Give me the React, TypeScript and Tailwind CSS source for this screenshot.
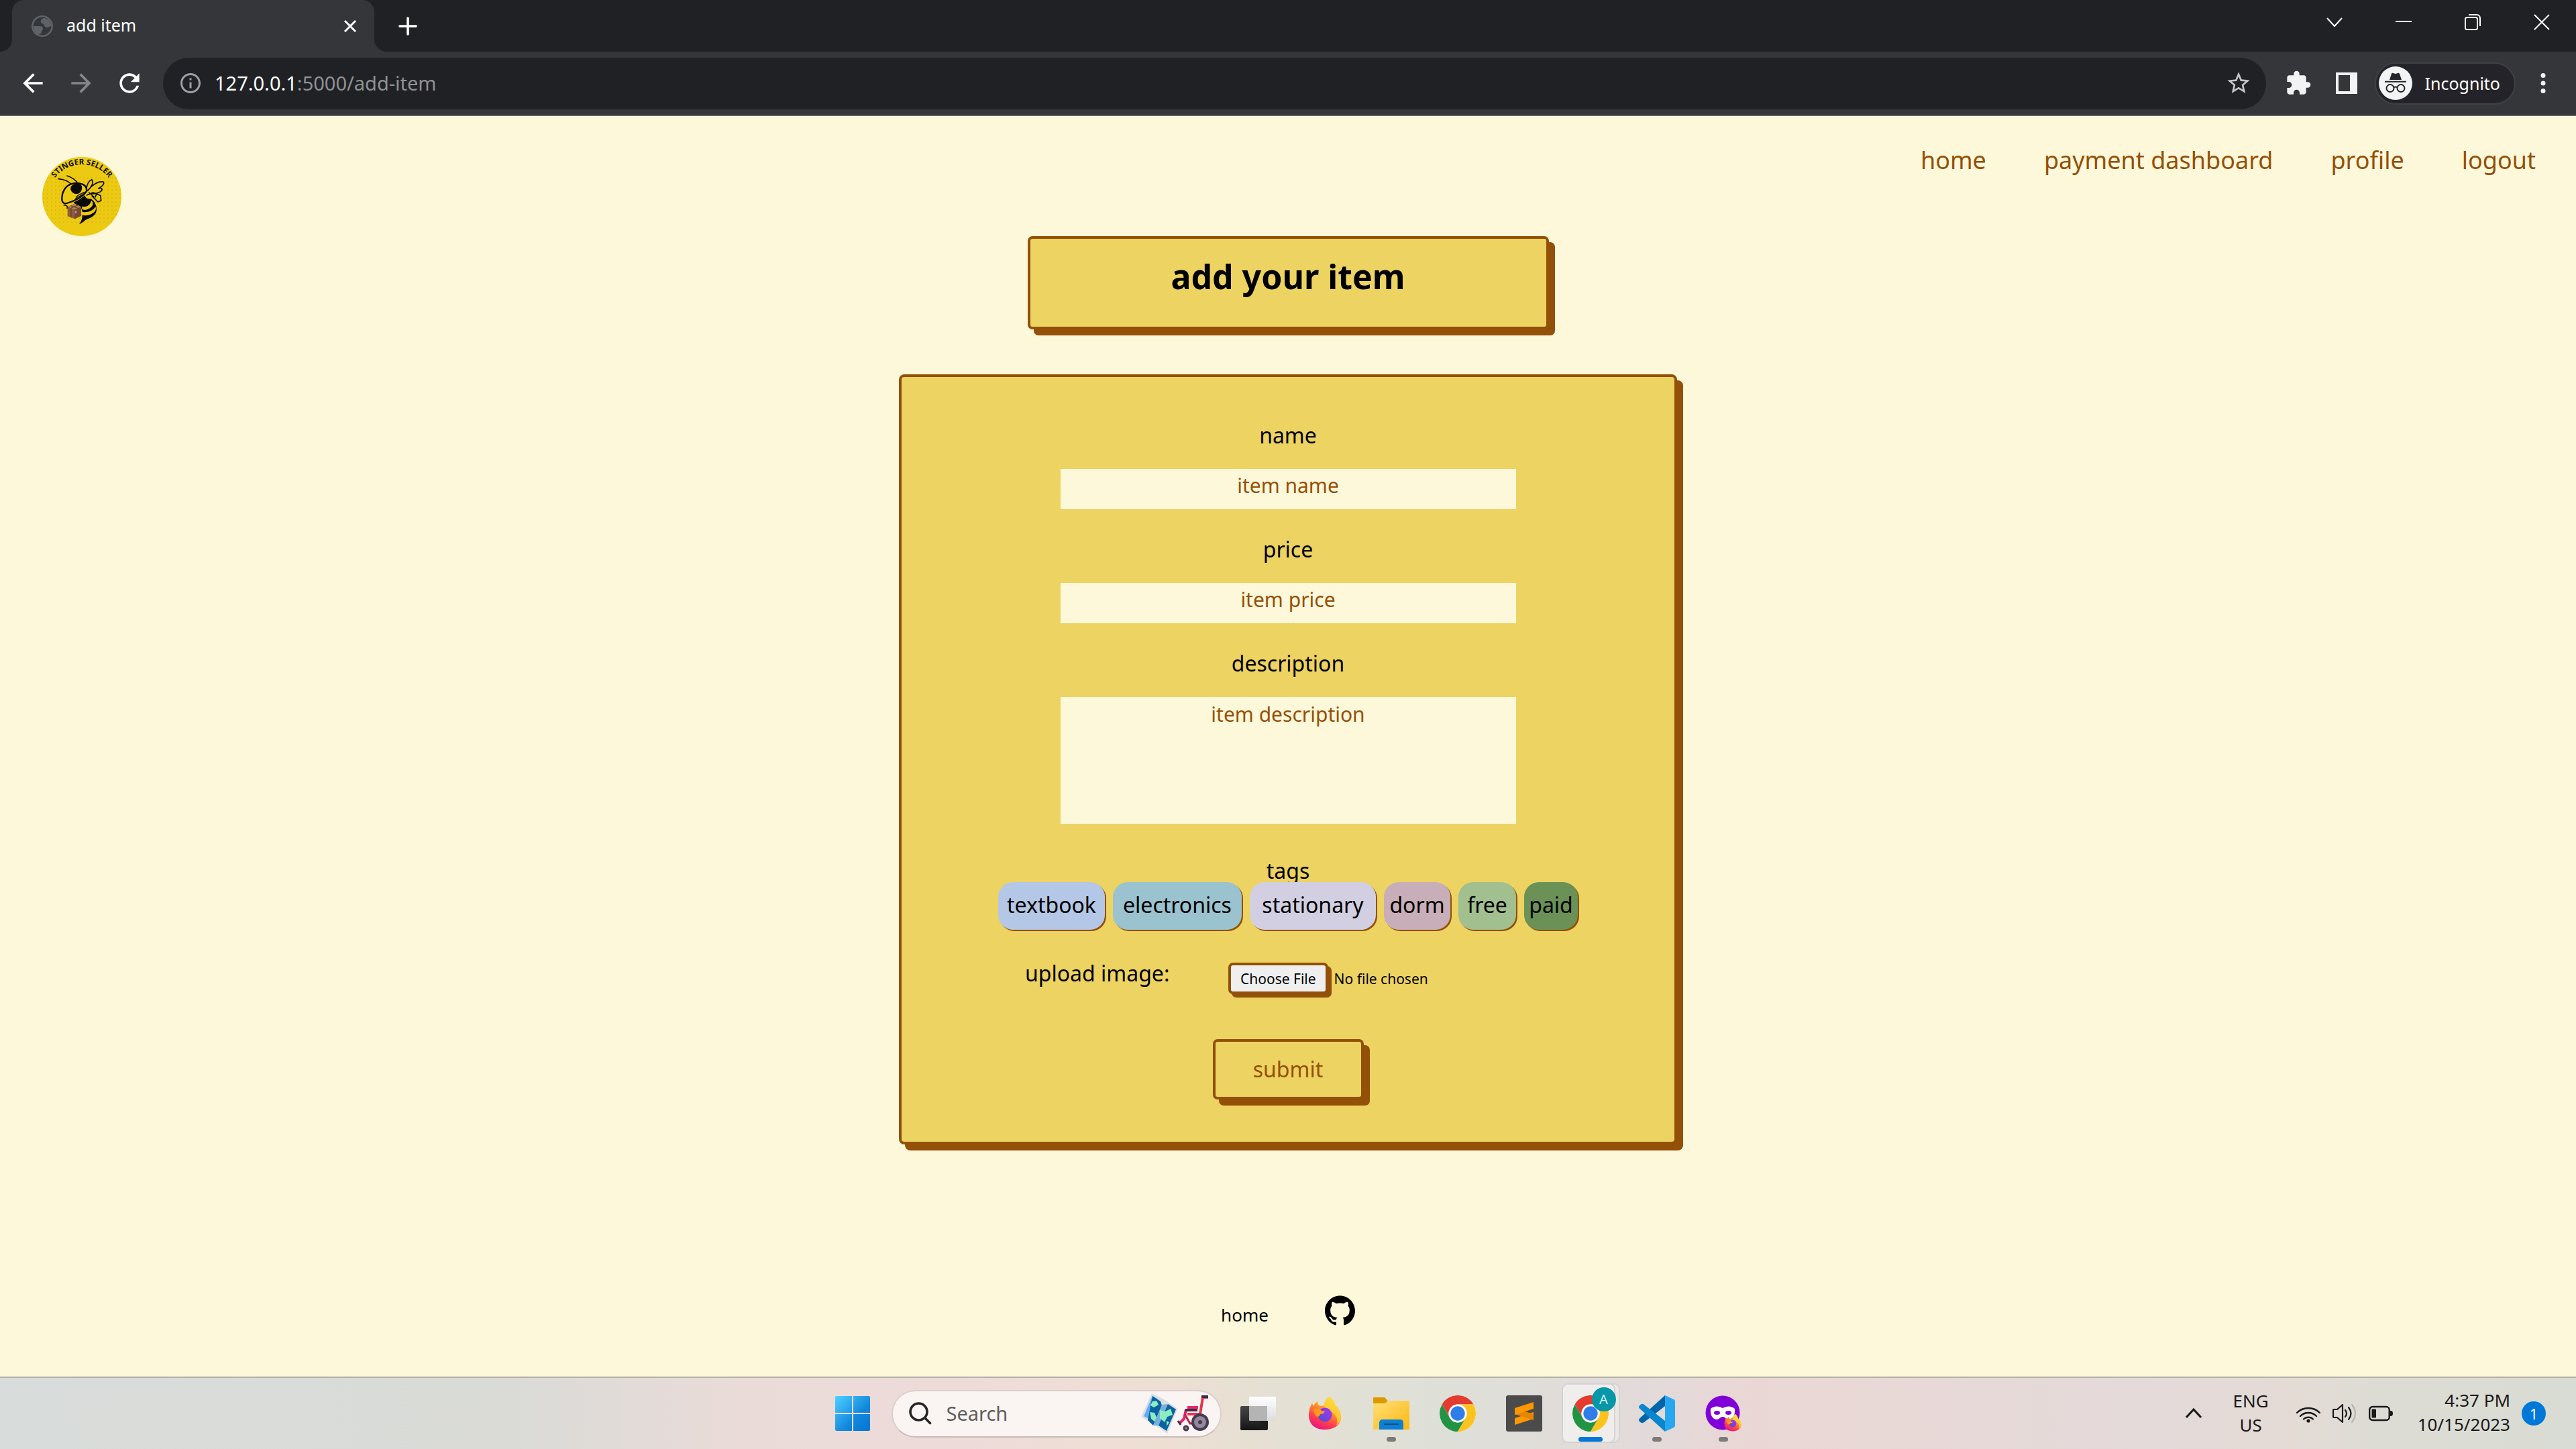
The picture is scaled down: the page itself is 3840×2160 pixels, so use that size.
import React from 'react';
import {
  MdArrowBack,
  MdArrowForward,
  MdExtension,
  MdInfoOutline,
  MdRefresh,
  MdStarBorder,
} from 'react-icons/md';
import { SiGithub } from 'react-icons/si';

const NAV_LINKS = ['home', 'payment dashboard', 'profile', 'logout'];

const TAGS = [
  { label: 'textbook', style: 'w-[159px] bg-[#b4c7e7]' },
  { label: 'electronics', style: 'w-[192px] bg-[#9ac2cf]' },
  { label: 'stationary', style: 'w-[188px] bg-[#d2cfe2]' },
  { label: 'dorm', style: 'w-[99px] bg-[#c8aeb8]' },
  { label: 'free', style: 'w-[86px] bg-[#a2bf8f]' },
  { label: 'paid', style: 'w-[80px] bg-[#6b9156]' },
];

/* ---------- Browser chrome ---------- */

const TabStrip: React.FC = () => (
  <div className="flex h-[77px] items-center bg-[#202124] pl-[18px] text-white">
    <div className="relative flex h-full w-[540px] items-center rounded-t-[18px] bg-[#35363a] pl-[29px] pr-[26px]">
      <svg className="absolute bottom-0 -left-[18px] h-[18px] w-[18px]" viewBox="0 0 18 18">
        <path d="M18 0v18H0C10 18 18 10 18 0z" fill="#35363a" />
      </svg>
      <svg className="absolute bottom-0 -right-[18px] h-[18px] w-[18px]" viewBox="0 0 18 18">
        <path d="M0 0v18h18C8 18 0 10 0 0z" fill="#35363a" />
      </svg>
      <svg className="h-8 w-8" viewBox="0 0 32 32">
        <circle cx="16" cy="16" r="14.7" fill="none" stroke="#5f6368" strokeWidth="2.6" />
        <path d="M18 4c-3 1-5 3-4 6 0 2 3 2 4 3 1 2 2 5 6 5 2 0 3-2 5-2 1-7-5-12-11-12z" fill="#5f6368" />
        <path d="M3 16h9c3 0 5 1 5 4 0 2-2 2-2 4 0 3-2 3-4 5C6 27 3 22 3 16z" fill="#5f6368" />
      </svg>
      <span className="mb-1 ml-5 flex-1 text-[25px] leading-8">add item</span>
      <button type="button" aria-label="Close tab">
        <svg className="h-5 w-5" viewBox="0 0 20 20" stroke="#fff" strokeWidth="3">
          <path d="M2 2l16 16M18 2L2 18" />
        </svg>
      </button>
    </div>
    <button type="button" aria-label="New tab" className="ml-9">
      <svg className="h-7 w-7" viewBox="0 0 28 28" stroke="#fff" strokeWidth="3.6" strokeLinecap="round">
        <path d="M14 2v24M2 14h24" />
      </svg>
    </button>
    <div className="mr-[39px] mb-3 ml-auto flex items-center gap-[79px]">
      <button type="button" aria-label="Search tabs">
        <svg className="h-6 w-6" viewBox="0 0 24 24" fill="none" stroke="#fff" strokeWidth="2">
          <path d="M1 6l11 12L23 6" />
        </svg>
      </button>
      <button type="button" aria-label="Minimize">
        <svg className="h-6 w-6" viewBox="0 0 24 24" stroke="#fff" strokeWidth="2">
          <path d="M0 11h24" />
        </svg>
      </button>
      <button type="button" aria-label="Restore">
        <svg className="h-6 w-6" viewBox="0 0 24 24" fill="none" stroke="#fff" strokeWidth="2">
          <rect x="1" y="5" width="18" height="18" rx="2.5" />
          <path d="M6 1h12a5 5 0 0 1 5 5v12" />
        </svg>
      </button>
      <button type="button" aria-label="Close">
        <svg className="h-6 w-6" viewBox="0 0 24 24" stroke="#fff" strokeWidth="2">
          <path d="M1 1l22 22M23 1L1 23" />
        </svg>
      </button>
    </div>
  </div>
);

const Toolbar: React.FC = () => (
  <div className="flex h-24 items-center border-b-2 border-[#5f6064] bg-[#35363a] pl-[27px] text-white">
    <div className="flex items-center gap-7">
      <button type="button" aria-label="Back">
        <MdArrowBack className="h-11 w-11" />
      </button>
      <button type="button" aria-label="Forward">
        <MdArrowForward className="h-11 w-11 text-[#85868a]" />
      </button>
      <button type="button" aria-label="Reload">
        <MdRefresh className="h-11 w-11" />
      </button>
    </div>
    <div className="ml-7 flex h-[77px] flex-1 items-center rounded-full bg-[#202124] pl-[23px] pr-[21px]">
      <MdInfoOutline className="h-9 w-9 text-[#9aa0a6]" />
      <div className="ml-[18px] flex-1 text-[29px] leading-10 text-[#8f9195]">
        <span className="text-white">127.0.0.1</span>:5000/add-item
      </div>
      <button type="button" aria-label="Bookmark">
        <MdStarBorder className="h-10 w-10 text-[#c4c5c7]" />
      </button>
    </div>
    <button type="button" aria-label="Extensions" className="ml-7">
      <MdExtension className="h-10 w-10 text-[#f1f3f4]" />
    </button>
    <button type="button" aria-label="Side panel" className="ml-9">
      <svg className="h-8 w-8" viewBox="0 0 32 32">
        <path d="M0 0h32v32H0zM4 4v24h17V4z" fill="#f1f3f4" fillRule="evenodd" />
      </svg>
    </button>
    <button
      type="button"
      className="ml-[26px] flex h-[63px] items-center rounded-full border-2 border-[#3f4044] bg-[#242329] pl-1 pr-[21px]"
    >
      <svg className="h-[50px] w-[50px]" viewBox="0 0 50 50">
        <circle cx="25" cy="25" r="25" fill="#f1f3f4" />
        <path d="M16 20l3-9q.6-1.600 2.200-1l3.800 1 3.800-1q1.600-.6 2.200 1l3 9z" fill="#242329" />
        <path d="M9 22.800h32M22 31.500q3-2 6 0" fill="none" stroke="#242329" strokeWidth="2" />
        <circle cx="17" cy="32.500" r="5.500" fill="none" stroke="#242329" strokeWidth="2" />
        <circle cx="33" cy="32.500" r="5.500" fill="none" stroke="#242329" strokeWidth="2" />
      </svg>
      <span className="ml-[19px] text-[25px] leading-8">Incognito</span>
    </button>
    <button type="button" aria-label="Menu" className="mr-10 ml-8">
      <svg className="h-9 w-[18px]" viewBox="0 0 18 36" fill="#f1f3f4">
        <circle cx="9" cy="6.500" r="3.500" />
        <circle cx="9" cy="18" r="3.500" />
        <circle cx="9" cy="29.500" r="3.500" />
      </svg>
    </button>
  </div>
);

/* ---------- Site ---------- */

const Logo: React.FC = () => (
  <svg className="h-[118px] w-[118px]" viewBox="39 41 354 354" role="img" aria-label="Stinger Seller">
    <defs>
      <path id="logo-arc" d="M70 190A150 150 0 0 1 362 190" />
      <pattern id="logo-dots" width="18" height="18" patternUnits="userSpaceOnUse">
        <circle cx="9" cy="9" r="2" fill="#b99a10" />
      </pattern>
      <clipPath id="logo-clip">
        <circle cx="216" cy="218" r="177" />
      </clipPath>
    </defs>
    <circle cx="216" cy="218" r="177" fill="#edca12" />
    <rect x="39" y="126" width="354" height="220" fill="url(#logo-dots)" clipPath="url(#logo-clip)" />
    <text fontFamily="Noto Sans, sans-serif" fontWeight="700" fontSize="35" fill="#111">
      <textPath href="#logo-arc" startOffset="50%" textAnchor="middle">
        STINGER SELLER
      </textPath>
    </text>
    <g fill="none" stroke="#0a0a0a" strokeWidth="5" strokeLinecap="round" strokeLinejoin="round">
      <path d="M111 139c22 2 42 8 56 22M150 125c22 7 40 20 49 36" />
      <path d="M236 186c2-22 10-38 24-44 12 12-2 34-18 50 16-24 46-44 70-40 8 8-8 24-22 30 14-4 20 0 14 10-12 12-34 14-48 14" />
      <path d="M238 212l28-12 16 6-6 14M262 216l26 26 14-6-2-22-18-8M248 200l22 20M136 256c12 0 18 6 14 14" />
      <path
        d="M168 162c-26 8-40 36-41 62-1 20 8 28 22 24 30-8 66-26 84-48 10-14 2-30-14-37-16-6-36-7-51-1z"
        fill="#edca12"
        strokeWidth="7"
      />
      <path d="M228 198c-14 8-28 12-38 22M224 206c-10 8-26 12-36 22" strokeWidth="4" />
    </g>
    <path d="M166 178c4-14 20-20 34-18 16 2 18 14 16 24-2 14-14 24-27 22-14-2-26-14-23-28z" fill="#0a0a0a" />
    <path
      d="M178 244c18-6 36-18 52-32 2 14 14 18 26 16 16 8 26 28 26 48 0 26-24 36-44 44-12 6-22 18-34 22 10-12 14-26 14-42 2-16-2-30-12-40-10-4-20-8-28-16z"
      fill="#0a0a0a"
    />
    <path d="M216 262c18 6 38-4 42-26 8 6 8 14 6 20-10 18-30 24-46 20zM218 286c22 6 44-2 60-22 2 10 0 16-4 20-16 18-40 22-58 16z" fill="#edca12" />
    <path d="M182 251l31 13v40l-29 14-32-12v-42z" fill="#8d5c38" />
    <path d="M152 264l30-13 31 13-29 12z" fill="#b08058" />
    <path d="M184 276l29-12v40l-29 14z" fill="#79492a" />
    <path d="M166 258l32 12M198 257l-30 12M168 270v42" stroke="#5d3820" strokeWidth="3" />
    <path d="M185 284l8-4v10l-8 4z" fill="#8c9ee0" />
  </svg>
);

const SiteHeader: React.FC = () => (
  <header className="flex items-start justify-between pl-[63px] pr-[60px]">
    <a href="#home" className="mt-[61px]">
      <Logo />
    </a>
    <nav className="mt-[42px] flex gap-[86px] text-[36px] leading-[48px] text-[#955006]">
      {NAV_LINKS.map((link) => (
        <a key={link} href="#nav">
          {link}
        </a>
      ))}
    </nav>
  </header>
);

const ItemForm: React.FC = () => (
  <form className="mt-[67px] flex w-[1160px] max-w-full flex-col items-center rounded-[8px] border-4 border-[#935008] bg-[#edd362] pt-[67px] pb-[63px] text-[32px] leading-10 shadow-[9px_9px_0_#935008]">
    <label htmlFor="name">name</label>
    <input
      id="name"
      type="text"
      placeholder="item name"
      className="mt-[30px] h-[60px] w-[679px] bg-[#fef8db] pb-3 text-center text-[30px] placeholder:text-[#955006]"
    />
    <label htmlFor="price" className="mt-10">
      price
    </label>
    <input
      id="price"
      type="text"
      placeholder="item price"
      className="mt-[30px] h-[60px] w-[679px] bg-[#fef8db] pb-3 text-center text-[30px] placeholder:text-[#955006]"
    />
    <label htmlFor="description" className="mt-10">
      description
    </label>
    <textarea
      id="description"
      placeholder="item description"
      className="mt-[30px] h-[189px] w-[679px] resize-none bg-[#fef8db] pt-[6px] text-center text-[30px] placeholder:text-[#955006]"
    />
    <span className="mt-[53px] leading-[34px]">tags</span>
    <div className="flex gap-3">
      {TAGS.map((tag) => (
        <button
          key={tag.label}
          type="button"
          className={`h-[71px] rounded-[22px] pb-1 shadow-[2px_2px_0_#935008] ${tag.style}`}
        >
          {tag.label}
        </button>
      ))}
    </div>
    <div className="mt-[45px] grid h-[51px] w-[784px] grid-cols-[303px_1fr] items-start">
      <label htmlFor="image">upload image:</label>
      <input
        id="image"
        type="file"
        className="mt-1 pb-2 text-[21px] leading-7 file:mr-[9px] file:h-[47px] file:rounded-[7px] file:border-4 file:border-solid file:border-[#935008] file:bg-[#efefef] file:px-[14px] file:shadow-[5px_5px_0_#935008]"
      />
    </div>
    <button
      type="submit"
      className="mt-[67px] h-[90px] w-[225px] rounded-[7px] border-4 border-[#935008] bg-[#edd362] text-[#955006] shadow-[9px_9px_0_#935008]"
    >
      submit
    </button>
  </form>
);

const SiteFooter: React.FC = () => (
  <footer className="flex items-end justify-center gap-[84px] pb-[76px] text-[26px] leading-8 text-black">
    <a href="#home">home</a>
    <a href="#github" aria-label="GitHub">
      <SiGithub className="h-[45px] w-[45px]" />
    </a>
  </footer>
);

/* ---------- Taskbar icons ---------- */

const WindowsIcon: React.FC = () => (
  <svg className="h-[52px] w-[52px]" viewBox="0 0 52 52">
    <defs>
      <linearGradient id="win" x1="0" y1="0" x2="52" y2="52" gradientUnits="userSpaceOnUse">
        <stop offset="0" stopColor="#4fd2ff" />
        <stop offset=".6" stopColor="#1288dd" />
        <stop offset="1" stopColor="#0474d2" />
      </linearGradient>
    </defs>
    <path
      d="M2 0h23v25H0V2q0-2 2-2zM27 0h23q2 0 2 2v23H27zM0 27h25v25H2q-2 0-2-2zM27 27h25v23q0 2-2 2H27z"
      fill="url(#win)"
    />
  </svg>
);

const SearchArt: React.FC = () => (
  <svg className="h-[66px] w-[105px]" viewBox="-4 -6 105 66">
    <path d="M-3 32L13-3l18 9 18 12 2 3-15 36-20-14z" fill="#d9dde3" />
    <path d="M1 31L14 1l8 5-13 29z" fill="#62a8f5" />
    <path d="M14 1l12 8 2 6-13 30-8-8z" fill="#0a63a0" />
    <path d="M28 14l9-1-14 32-8 0z" fill="#78b0dd" />
    <path d="M37 13l12 8-14 32-12-8z" fill="#0a63a0" />
    <path d="M14 9l6-1 3 6-7 4-5-3zM10 25l7 1 3 7-3 6-5-4zM25 22l8 2 8-4 3 9-8 3-4 8-7-6zM35 38l4 2-4 6z" fill="#8beec0" />
    <path d="M97 3h-8l-4 25H66" fill="none" stroke="#e8334f" strokeWidth="4" />
    <path d="M87 2h10" stroke="#3c2c44" strokeWidth="4" />
    <path d="M66 18h16M64 21l-3 14-7 7" fill="none" stroke="#e8256a" strokeWidth="4" strokeLinejoin="round" />
    <path d="M63 22h18" stroke="#3c2c44" strokeWidth="4" />
    <path d="M62 28l8 14h8" fill="none" stroke="#b82450" strokeWidth="3" />
    <path d="M52 38l4 6" stroke="#3c2c44" strokeWidth="3" />
    <circle cx="85" cy="40" r="11" fill="#94889c" stroke="#473b52" strokeWidth="4" />
    <circle cx="85" cy="40" r="3" fill="#473b52" />
    <circle cx="64" cy="49" r="3" fill="#94889c" stroke="#473b52" strokeWidth="3" />
  </svg>
);

const TaskViewIcon: React.FC = () => (
  <svg className="h-[50px] w-[54px]" viewBox="0 0 54 50">
    <defs>
      <linearGradient id="tv-back" x1="0" y1="0" x2="0" y2="1">
        <stop offset="0" stopColor="#474747" />
        <stop offset="1" stopColor="#141414" />
      </linearGradient>
      <linearGradient id="tv-front" x1="0" y1="0" x2="0" y2="1">
        <stop offset="0" stopColor="#fff" />
        <stop offset="1" stopColor="#dcdcdc" />
      </linearGradient>
    </defs>
    <rect y="14" width="32" height="36" rx="2" fill="url(#tv-back)" />
    <rect x="13" width="40" height="36" rx="2" fill="url(#tv-front)" />
    <path d="M13 14h27v22H15q-2 0-2-2z" fill="#b4b4b4" />
    <path d="M30 36h11v12q0 2-2 2h-9z" fill="#1c1c1c" />
  </svg>
);

const FirefoxShape: React.FC = () => (
  <g>
    <path
      d="M31 0c6 5 8 9 8 12 6 5 9 12 9 19 0 11-10 18-24 18S0 42 0 27c0-7 2-12 5-17l2 4c1-3 3-5 6-7 0 4 2 6 4 7 2 0 4-1 6-1 0-6 3-10 8-13z"
      fill="url(#ff-outer)"
    />
    <path d="M31 0c6 5 8 9 8 12 6 5 9 12 9 19 0 5-3 9-7 12 3-7 1-13-4-18-5-4-14-6-14-12 0-6 3-10 8-13z" fill="#ffd83a" opacity=".75" />
    <circle cx="24" cy="27" r="10.500" fill="url(#ff-globe)" />
    <path d="M7 19c5-3 9-1 12 2l5 1c-1 3-4 4-7 4-1 3-3 4-5 4-3-3-5-7-5-11z" fill="#ff9a1f" />
  </g>
);

const FirefoxIcon: React.FC = () => (
  <svg className="h-[50px] w-[48px]" viewBox="0 0 48 50">
    <defs>
      <linearGradient id="ff-outer" x1=".8" y1="0" x2=".3" y2="1">
        <stop offset="0" stopColor="#fff04a" />
        <stop offset=".4" stopColor="#ff9a22" />
        <stop offset=".75" stopColor="#ff3a50" />
        <stop offset="1" stopColor="#e1148a" />
      </linearGradient>
      <linearGradient id="ff-globe" x1="1" y1="0" x2="0" y2="1">
        <stop offset="0" stopColor="#b02ff0" />
        <stop offset="1" stopColor="#4b53c8" />
      </linearGradient>
    </defs>
    <FirefoxShape />
  </svg>
);

const FolderIcon: React.FC = () => (
  <svg className="h-[48px] w-[54px]" viewBox="0 0 54 48">
    <defs>
      <linearGradient id="folder" x1="0" y1="0" x2="1" y2="1">
        <stop offset="0" stopColor="#ffe07a" />
        <stop offset="1" stopColor="#fcb70f" />
      </linearGradient>
    </defs>
    <path d="M0 10V1q0-1 1-1h15q2 0 3 2l3 4-4 6H0z" fill="#dd9a00" />
    <path d="M0 9h16q2 0 4-2t4-2h29q1 0 1 1v41q0 1-1 1H1q-1 0-1-1z" fill="url(#folder)" />
    <path d="M9 48V38q0-5 5-5h26q5 0 5 5v10z" fill="#0f7fd0" />
    <path d="M16 40h22" stroke="#0a4f96" strokeWidth="2" />
  </svg>
);

const ChromeIcon: React.FC = () => (
  <svg className="h-[54px] w-[54px]" viewBox="0 0 48 48">
    <circle cx="24" cy="24" r="24" fill="#fff" />
    <path d="M3.200 12A24 24 0 0 1 44.800 12H24a12 12 0 0 0-10.400 18z" fill="#e33b2e" />
    <path d="M44.800 12A24 24 0 0 1 24 48l10.400-18A12 12 0 0 0 24 12z" fill="#fcc31e" />
    <path d="M24 48A24 24 0 0 1 3.200 12l10.400 18a12 12 0 0 0 20.800 0z" fill="#229342" />
    <circle cx="24" cy="24" r="12" fill="#fff" />
    <circle cx="24" cy="24" r="9.500" fill="#2f7de9" />
  </svg>
);

const SublimeIcon: React.FC = () => (
  <svg className="h-[54px] w-[54px]" viewBox="0 0 54 54">
    <rect width="54" height="54" rx="3" fill="#4b4b4b" />
    <path d="M13 34l28-9v10l-28 9z" fill="#ff9800" />
    <path d="M13 19l28 9v9l-28-9z" fill="#e88500" />
    <path d="M13 19l28-9v10l-28 9z" fill="#ff9800" />
  </svg>
);

const VsCodeIcon: React.FC = () => (
  <svg className="h-[54px] w-[54px]" viewBox="0 0 54 54">
    <path d="M3 40.500q-3-2-3-3.500t1.500-3L39 0v16L8 40q-2.500 2-5 .5z" fill="#0065a9" />
    <path d="M3 13.500Q0 15.500 0 17t1.500 3L39 54V38L8 14q-2.500-2-5-.5z" fill="#0a86cf" />
    <path d="M39 0l13 6q2 1 2 3v36q0 2-2 3l-13 6z" fill="#27a7f2" />
  </svg>
);

const PrivateFirefoxIcon: React.FC = () => (
  <svg className="h-[54px] w-[54px]" viewBox="0 0 54 54">
    <circle cx="26" cy="26" r="25.500" fill="#8000d7" />
    <path
      d="M8 20q6-5 13-3l5 2 5-2q7-2 13 3c1 9-3 16-9 16-4 0-5-4-9-4s-5 4-9 4c-6 0-10-7-9-16z"
      fill="#fff"
    />
    <ellipse cx="17.500" cy="26" rx="4.500" ry="3" fill="#8000d7" />
    <ellipse cx="34.500" cy="26" rx="4.500" ry="3" fill="#8000d7" />
    <svg x="28" y="28" width="26" height="26" viewBox="0 0 48 50">
      <FirefoxShape />
    </svg>
  </svg>
);

interface TaskProps {
  label: string;
  children: React.ReactNode;
  running?: boolean;
}

const Task: React.FC<TaskProps> = ({ label, children, running }) => (
  <button type="button" aria-label={label} className="relative flex h-full w-[99px] items-center justify-center">
    {children}
    {running && <span className="absolute bottom-[11px] h-[7px] w-[14px] rounded-full bg-[#7d7b79]" />}
  </button>
);

const Tray: React.FC = () => (
  <div className="flex items-center justify-end pr-[45px] text-[#191919]">
    <svg className="h-6 w-6" viewBox="0 0 24 24" fill="none" stroke="#191919" strokeWidth="3">
      <path d="M1 18L12 6l11 12" />
    </svg>
    <div className="mb-[2px] ml-[47px] text-center leading-9">
      <div>ENG</div>
      <div>US</div>
    </div>
    <svg className="ml-[41px] h-[27px] w-9" viewBox="0 0 36 27" fill="none" stroke="#191919" strokeWidth="2.400">
      <path d="M1 12a24 24 0 0 1 34 0M6 17a17 17 0 0 1 24 0M11 21.500a10 10 0 0 1 14 0" strokeLinecap="round" />
      <circle cx="18" cy="24" r="2.600" fill="#191919" stroke="none" />
    </svg>
    <svg className="ml-[18px] h-[30px] w-9" viewBox="0 0 36 30" fill="none" stroke="#191919" strokeWidth="2.200" strokeLinejoin="round">
      <path d="M1 10q0-1 1-1h5l8-7v26l-8-7H2q-1 0-1-1z" />
      <path d="M19 10q4 5 0 10M24 6q7 9 0 18" strokeLinecap="round" />
      <path d="M29 2q10 13 0 26" stroke="#b5b5b0" strokeLinecap="round" />
    </svg>
    <svg className="ml-[18px] h-6 w-9" viewBox="0 0 36 24">
      <rect x="1.200" y="2" width="29.500" height="20" rx="4.500" fill="none" stroke="#191919" strokeWidth="2.400" />
      <rect x="4.500" y="5.500" width="6.500" height="13" rx="1" fill="#191919" />
      <path d="M32 8h1q3 0 3 4t-3 4h-1z" fill="#191919" />
    </svg>
    <div className="mb-1 ml-[37px] text-right leading-9">
      <div>4:37 PM</div>
      <div>10/15/2023</div>
    </div>
    <span className="ml-[17px] flex h-9 w-9 items-center justify-center rounded-full bg-[#0078d7] text-[22px] text-white">1</span>
  </div>
);

const Taskbar: React.FC = () => (
  <div className="grid h-[108px] grid-cols-[1fr_auto_1fr] border-t-2 border-[#b3b0ab] bg-[linear-gradient(90deg,#d8dcda_0%,#dadbd7_20%,#eadbd8_29%,#eddbda_37%,#eedfd3_45%,#e5e0d3_49%,#dee0d8_56%,#e2dada_64%,#ead7d5_68%,#e3dad9_84%,#e4dbd5_89%,#dddcd4_92%,#d9dcd4_100%)] text-[26px]">
    <div />
    <div className="flex items-center">
      <Task label="Start">
        <WindowsIcon />
      </Task>
      <label className="mr-[6px] ml-2 flex h-[71px] w-[492px] items-center rounded-full border-2 border-b-[#c9bcb8] border-[#dccdcb] bg-[#faf5f3] pr-[14px] pl-6">
        <svg className="h-[34px] w-[34px]" viewBox="0 0 34 34" fill="none" stroke="#252525" strokeWidth="3.600" strokeLinecap="round">
          <circle cx="14.500" cy="14.500" r="12.500" />
          <path d="M23.500 23.500l8 8" />
        </svg>
        <input
          type="search"
          placeholder="Search"
          aria-label="Search"
          className="ml-[22px] w-0 flex-1 bg-transparent text-[29px] placeholder:text-[#5e5c5b]"
        />
        <SearchArt />
      </label>
      <Task label="Task view">
        <TaskViewIcon />
      </Task>
      <Task label="Firefox">
        <FirefoxIcon />
      </Task>
      <Task label="File Explorer" running>
        <FolderIcon />
      </Task>
      <Task label="Google Chrome">
        <ChromeIcon />
      </Task>
      <Task label="Sublime Text">
        <SublimeIcon />
      </Task>
      <Task label="Google Chrome, incognito">
        <span className="absolute top-[8px] left-[20px] h-[89px] w-[73px] rounded-[9px] border-2 border-[#d6d2d1] bg-[#eae7e6]" />
        <span className="absolute top-[8px] left-[6px] h-[89px] w-[80px] rounded-[9px] border-2 border-[#d6d2d1] bg-[#f0eeed]" />
        <span className="relative">
          <ChromeIcon />
        </span>
        <span className="absolute top-[14px] left-[51px] flex h-9 w-9 items-center justify-center rounded-full bg-[#0797a7] text-[20px] text-[#d5f3f5]">
          A
        </span>
        <span className="absolute bottom-[11px] h-[7px] w-9 rounded-full bg-[#0078d7]" />
      </Task>
      <Task label="Visual Studio Code" running>
        <VsCodeIcon />
      </Task>
      <Task label="Firefox private browsing" running>
        <PrivateFirefoxIcon />
      </Task>
    </div>
    <Tray />
  </div>
);

export default function App() {
  return (
    <div className="flex min-h-screen flex-col bg-[#fef8db] font-['Noto_Sans',sans-serif]">
      <TabStrip />
      <Toolbar />
      <div className="flex flex-1 flex-col justify-between text-black">
        <div>
          <SiteHeader />
          <main className="flex flex-col items-center">
            <h1 className="h-[139px] w-[777px] max-w-full rounded-[7px] border-4 border-[#935008] bg-[#edd362] pt-6 text-center text-[50px] leading-[64px] font-bold shadow-[9px_9px_0_#935008]">
              add your item
            </h1>
            <ItemForm />
          </main>
        </div>
        <SiteFooter />
      </div>
      <Taskbar />
    </div>
  );
}
